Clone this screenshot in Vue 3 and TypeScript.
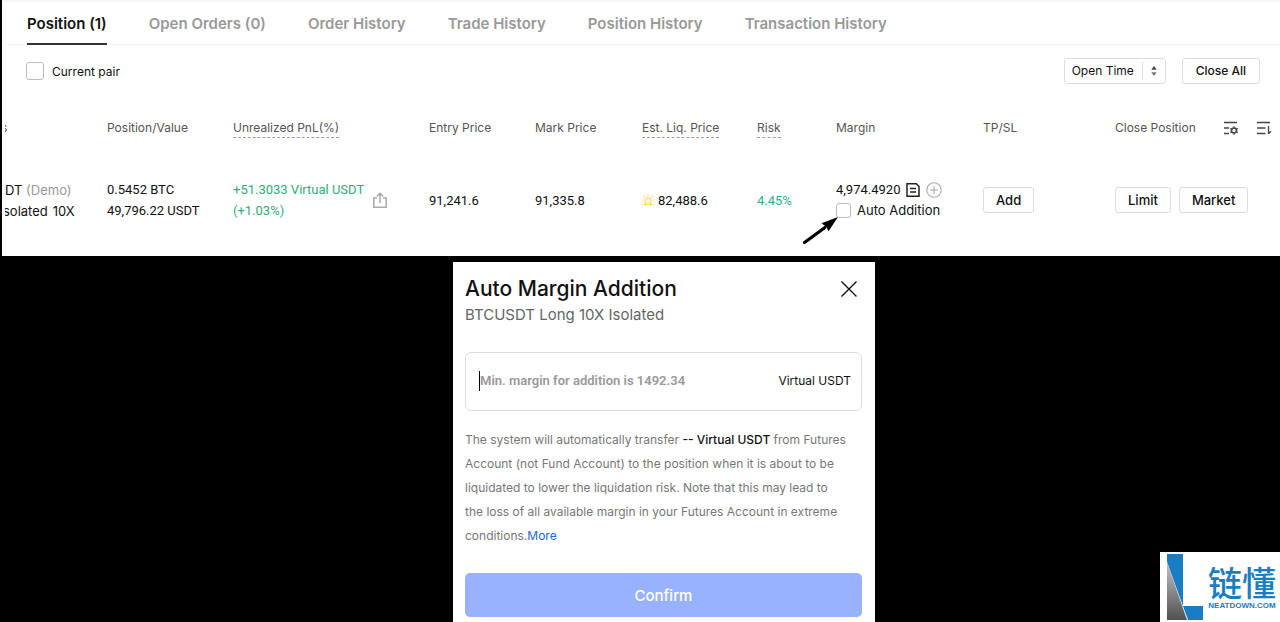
<script setup lang="ts">
import { ref } from 'vue'

const tabs: string[] = [
  'Position (1)',
  'Open Orders (0)',
  'Order History',
  'Trade History',
  'Position History',
  'Transaction History',
]
const activeTab = ref(0)
const currentPair = ref(false)
const autoAddition = ref(false)
const sortBy = ref('Open Time')
const amount = ref('')
</script>

<template>
  <div class="page">
    <section class="positions">
      <nav class="tabs">
        <button
          v-for="(tab, i) in tabs"
          :key="tab"
          type="button"
          class="tab"
          :class="{ active: i === activeTab }"
          @click="activeTab = i"
        >{{ tab }}</button>
      </nav>

      <div class="toolbar">
        <label class="check">
          <input v-model="currentPair" type="checkbox" class="box large">
          <span>Current pair</span>
        </label>
        <div class="actions">
          <div class="sort">
            <select v-model="sortBy" aria-label="Sort by">
              <option>Open Time</option>
            </select>
            <svg class="sort-arrows" viewBox="0 0 6 12" width="6" height="12">
              <path d="M0.3 4.8 3 1 5.7 4.8z" fill="#444" />
              <path d="M0.3 7.2 3 11 5.7 7.2z" fill="#777" />
            </svg>
          </div>
          <button type="button" class="btn wide">Close All</button>
        </div>
      </div>

      <table class="grid">
        <colgroup>
          <col class="c-symbol"><col class="c-value"><col class="c-pnl"><col class="c-entry"><col class="c-mark">
          <col class="c-liq"><col class="c-risk"><col class="c-margin"><col class="c-tpsl"><col>
        </colgroup>
        <thead>
          <tr>
            <th><div class="clip head-clip"><span class="cut-head">s</span></div></th>
            <th>Position/Value</th>
            <th><span class="hint">Unrealized PnL(%)</span></th>
            <th>Entry Price</th>
            <th>Mark Price</th>
            <th><span class="hint">Est. Liq. Price</span></th>
            <th><span class="hint">Risk</span></th>
            <th>Margin</th>
            <th>TP/SL</th>
            <th>
              <div class="close-head">
                <span>Close Position</span>
                <svg viewBox="0 0 16 14" width="16" height="14" fill="none" stroke="#444" stroke-width="1.3">
                  <path d="M1 1.5H14M1 7H6M1 12.5H6" />
                  <circle cx="11" cy="9.5" r="2.5" stroke-width="1.6" />
                  <path d="M11 5.2v1.6M11 12.2v1.6M7.3 7.4l1.4.8M13.3 10.8l1.4.8M7.3 11.6l1.4-.8M13.3 8.2l1.4-.8" />
                </svg>
                <svg viewBox="0 0 16 14" width="16" height="14" fill="none" stroke="#444" stroke-width="1.3">
                  <path d="M1 1.5H14M1 7H9.5M1 12.5H9.5M12.5 5V13M12.5 12.8 15 10.2" />
                </svg>
              </div>
            </th>
          </tr>
        </thead>
        <tbody>
          <tr>
            <td>
              <div class="clip">
                <div>DT <span class="muted">(Demo)</span></div>
                <div class="cut">solated<span class="lever">10X</span></div>
              </div>
            </td>
            <td class="num">0.5452 BTC<br>49,796.22 USDT</td>
            <td class="num">
              <div class="pnl">
                <span>+51.3033 Virtual USDT<br>(+1.03%)</span>
                <svg viewBox="0 0 14 16" width="14" height="16" fill="none" stroke="#aaa" stroke-width="1.5">
                  <path d="M4 6H.8V15.2H13.2V6H10M7 11V1.5M3.9 4.4 7 1.3 10.1 4.4" />
                </svg>
              </div>
            </td>
            <td class="num">91,241.6</td>
            <td class="num">91,335.8</td>
            <td class="num">
              <span class="liq">
                <svg viewBox="0 0 12 12" width="12" height="12" fill="none" stroke="#f7d774" stroke-width="1.2">
                  <path d="M1 10.5H11M3.2 10.3V7a2.8 2.8 0 0 1 5.6 0V10.3M6 .8V2.5M1.7 2.2 3 3.5M10.3 2.2 9 3.5M.3 6H1.7M10.3 6H11.7M6 7V9" />
                </svg>
                82,488.6
              </span>
            </td>
            <td class="num risk">4.45%</td>
            <td>
              <div class="margin">
                <div class="margin-line">
                  <span class="num">4,974.4920</span>
                  <svg viewBox="0 0 14 16" width="14" height="16" fill="none" stroke="#222" stroke-width="1.5">
                    <path d="M1 1.8H10.3L13 4.5V14.2H1zM4 6.5H10M4 10H10" />
                  </svg>
                  <svg viewBox="0 0 16 16" width="16" height="16" fill="none" stroke="#aaa" stroke-width="1.1">
                    <circle cx="8" cy="8" r="7.2" />
                    <path d="M8 4V12M4 8H12" />
                  </svg>
                </div>
                <label class="check small-gap">
                  <input v-model="autoAddition" type="checkbox" class="box">
                  <span>Auto Addition</span>
                </label>
                <svg class="pointer" viewBox="0 0 38 30" width="38" height="30">
                  <path d="M3.5 27.5 24 12.5" stroke="#000" stroke-width="3.2" stroke-linecap="round" />
                  <path d="M37 2 27.5 16.2 25.5 12 20.5 8.2z" fill="#000" />
                </svg>
              </div>
            </td>
            <td><button type="button" class="btn">Add</button></td>
            <td>
              <div class="pair">
                <button type="button" class="btn">Limit</button>
                <button type="button" class="btn">Market</button>
              </div>
            </td>
          </tr>
        </tbody>
      </table>
    </section>

    <main class="stage">
      <form class="dialog" @submit.prevent>
        <header class="dialog-head">
          <h1>Auto Margin Addition</h1>
          <button type="button" class="close" aria-label="Close">
            <svg viewBox="0 0 16 16" width="16" height="16" stroke="#111" stroke-width="1.4">
              <path d="M.5.5 15.5 15.5M15.5.5.5 15.5" />
            </svg>
          </button>
        </header>
        <p class="sub">BTCUSDT Long 10X Isolated</p>
        <label class="field">
          <span class="caret"></span>
          <input v-model="amount" type="text" placeholder="Min. margin for addition is 1492.34">
          <span>Virtual USDT</span>
        </label>
        <p class="note">
          The system will automatically transfer <strong>-- Virtual USDT</strong> from Futures Account (not Fund
          Account) to the position when it is about to be liquidated to lower the liquidation risk. Note that this
          may lead to the loss of all available margin in your Futures Account in extreme conditions.<a href="#">More</a>
        </p>
        <button type="submit" class="confirm">Confirm</button>
      </form>
    </main>

    <aside class="brand">
      <svg viewBox="0 0 38 68" width="38" height="68">
        <defs>
          <linearGradient id="fold" x1="0" y1="0" x2="0" y2="1">
            <stop offset="0" stop-color="#c4c4c4" />
            <stop offset="1" stop-color="#505050" />
          </linearGradient>
        </defs>
        <path d="M1 1H17V53H37V67H22L1 9z" fill="#1a7dc4" />
        <path d="M1 9 21 67H1z" fill="url(#fold)" />
      </svg>
      <div class="brand-text">
        <span class="brand-name">链懂</span>
        <span class="brand-url">NEATDOWN.COM</span>
      </div>
    </aside>
  </div>
</template>

<style>
body {
  background: #000;
}
</style>

<style scoped>
* {
  box-sizing: border-box;
}
.page {
  position: relative;
  min-height: 100vh;
  overflow: hidden;
  background: #000;
  color: #111;
  font: 13px/21px Inter, "Noto Sans CJK SC", sans-serif;
}
button,
input,
select {
  font: inherit;
  color: inherit;
}
.positions {
  margin-left: 2px;
  padding-bottom: 24px;
  background: #fff;
  border-top: 2px solid #f7f7f7;
}
.tabs {
  display: flex;
  gap: 42px;
  margin-left: 4px;
  padding-left: 21px;
  border-bottom: 1px solid #f2f2f2;
}
.tab {
  height: 43px;
  margin-bottom: -1px;
  padding: 1px 0 0;
  border: 0;
  border-bottom: 2px solid transparent;
  background: none;
  color: #999;
  font-size: 15px;
  font-weight: 600;
  white-space: nowrap;
}
.tab.active {
  color: #111;
  border-color: #333;
}
.toolbar {
  display: flex;
  align-items: center;
  justify-content: space-between;
  height: 52px;
  padding: 0 20px 0 24px;
  font-size: 12px;
}
.check {
  display: flex;
  align-items: center;
  gap: 8px;
}
.small-gap {
  gap: 6px;
}
.box {
  appearance: none;
  width: 15px;
  height: 15px;
  margin: 0;
  border: 1px solid #bbb;
  border-radius: 3px;
  background: #fff;
}
.box.large {
  width: 18px;
  height: 18px;
}
.box:checked {
  background: #2f6bff;
}
.actions {
  display: flex;
  gap: 16px;
}
.sort {
  display: flex;
  align-items: center;
  height: 26px;
  padding-right: 8px;
  border: 1px solid #ddd;
  border-radius: 3px;
}
.sort select {
  appearance: none;
  width: 78px;
  height: 18px;
  margin-right: 8px;
  padding: 0 0 0 7px;
  border: 0;
  border-right: 1px solid #ddd;
  background: none;
  line-height: 18px;
}
.btn {
  height: 26px;
  padding: 0 12px;
  border: 1px solid #ddd;
  border-radius: 3px;
  background: #fff;
  font-weight: 500;
  line-height: 20px;
  white-space: nowrap;
}
.btn.wide {
  padding: 0 13px;
}
.grid {
  width: 100%;
  margin-top: 20px;
  table-layout: fixed;
  border-collapse: collapse;
  white-space: nowrap;
}
.c-symbol { width: 105px; }
.c-value { width: 126px; }
.c-pnl { width: 196px; }
.c-entry { width: 106px; }
.c-mark { width: 107px; }
.c-liq { width: 115px; }
.c-risk { width: 79px; }
.c-margin { width: 147px; }
.c-tpsl { width: 132px; }
th,
td {
  padding: 0;
  text-align: left;
  vertical-align: middle;
}
th {
  height: 21px;
  color: #555;
  font-size: 12px;
  font-weight: 400;
}
td {
  height: 94px;
  padding-top: 31px;
  padding-bottom: 1px;
}
td:first-child {
  padding-top: 33px;
}
.hint {
  display: inline-block;
  margin-bottom: -1px;
  border-bottom: 1px dashed #999;
  line-height: 19px;
}
.clip {
  margin-left: 3px;
  overflow: hidden;
}
.head-clip {
  width: 3px;
}
.cut-head {
  margin-left: -4px;
}
.cut {
  margin-left: -2px;
}
.lever {
  margin-left: 5px;
}
.muted {
  color: #999;
}
.close-head {
  display: flex;
  align-items: center;
}
.close-head span {
  margin-right: 27px;
}
.close-head svg + svg {
  margin-left: 17px;
}
.pnl {
  display: flex;
  align-items: center;
  gap: 9px;
  color: #2fae78;
}
.num {
  font-family: Roboto, Inter, sans-serif;
}
.liq {
  display: flex;
  align-items: center;
  gap: 4px;
}
.risk {
  color: #2bb08c;
}
.margin {
  position: relative;
}
.margin-line {
  display: flex;
  align-items: center;
  gap: 6px;
}
.pointer {
  position: absolute;
  top: 36px;
  left: -35px;
}
.pair {
  display: flex;
  gap: 8px;
}
.stage {
  display: flex;
  justify-content: center;
  padding: 6px 0 0 48px;
}
.dialog {
  width: 422px;
  padding: 13px 13px 5px 12px;
  background: #fff;
}
.dialog-head {
  display: flex;
  align-items: center;
  justify-content: space-between;
  padding-right: 5px;
}
h1 {
  margin: 0;
  font-size: 21px;
  font-weight: 500;
  line-height: 28px;
}
.close {
  display: flex;
  padding: 0;
  border: 0;
  background: none;
}
.sub {
  margin: 0 0 25px;
  color: #666;
  font-size: 15px;
  line-height: 24px;
}
.field {
  display: flex;
  align-items: center;
  height: 59px;
  padding: 0 10px 2px 13px;
  border: 1px solid #ddd;
  border-radius: 6px;
  font-size: 12px;
}
.caret {
  width: 1px;
  height: 20px;
  background: #000;
}
.field input {
  flex: 1;
  min-width: 0;
  padding: 0;
  border: 0;
  outline: 0;
  background: none;
  font-family: Roboto, Inter, sans-serif;
  font-size: 13px;
  font-weight: 600;
}
.field input::placeholder {
  color: #999;
  opacity: 1;
}
.note {
  margin: 17px 0 25px;
  padding-right: 14px;
  color: #777;
  font-size: 12px;
  line-height: 24px;
}
.note strong {
  color: #111;
  font-weight: 500;
}
.note a {
  color: #1a6ad8;
  text-decoration: none;
}
.confirm {
  display: block;
  width: 100%;
  height: 44px;
  border: 0;
  border-radius: 5px;
  background: #99b2ff;
  color: #fff;
  font-size: 15px;
  font-weight: 500;
}
.brand {
  position: absolute;
  right: 0;
  bottom: 0;
  display: flex;
  gap: 4px;
  width: 120px;
  height: 70px;
  padding: 1px 0 0 6px;
  background: #fff;
  color: #1a7dc4;
}
.brand-text {
  display: flex;
  flex-direction: column;
  align-items: center;
  padding-top: 10px;
}
.brand-name {
  font-family: "Noto Sans CJK SC", sans-serif;
  font-size: 34px;
  font-weight: 500;
  line-height: 38px;
}
.brand-url {
  font-family: "Liberation Sans", Arial, sans-serif;
  font-size: 8px;
  font-weight: 700;
  line-height: 10px;
}
</style>
